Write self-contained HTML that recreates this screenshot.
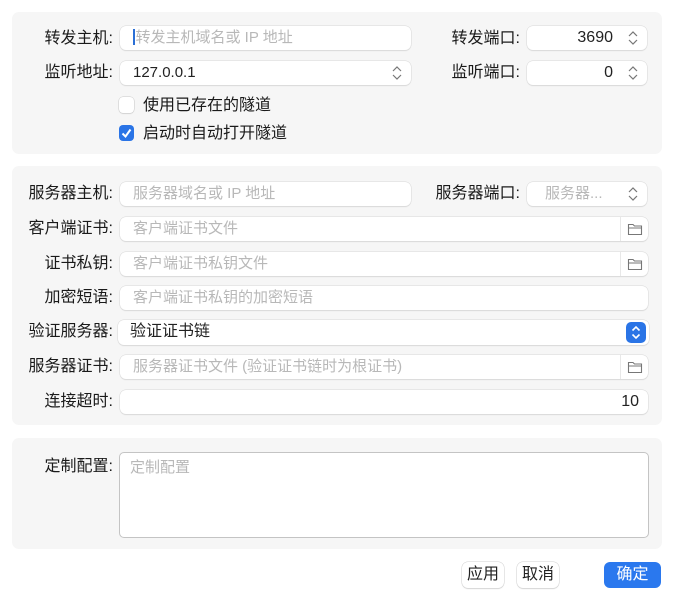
<!DOCTYPE html>
<html><head><meta charset="utf-8"><style>
*{box-sizing:border-box;margin:0;padding:0}
body{width:674px;height:600px;background:#fff;position:relative;overflow:hidden;font-family:"Liberation Sans","Noto Sans CJK SC",sans-serif;font-size:15px;color:#222}
.p{position:absolute;background:#f6f6f6;border-radius:7px}
.l{position:absolute;text-align:right;line-height:20px;color:#1a1a1a;font-size:16px}
.f{position:absolute;background:#fff;border-radius:6px;box-shadow:0 0 0 0.5px #d8d8d8,0 1px 1px rgba(0,0,0,.12);height:24px;line-height:24px;padding-left:13px;color:#222}
.ph{color:#b8b8b8}
.st{position:absolute;right:8px;top:4px;width:12px;height:16px}
.fold{position:absolute;right:0;top:0;width:28px;height:24px;border-left:1px solid #e8e8e8}
.cb{position:absolute;width:15px;height:16px;border-radius:4px;background:#fff;box-shadow:0 0 0 0.5px #c8c8c8,0 1px 1px rgba(0,0,0,.1)}
.btn{position:absolute;top:562px;height:26px;border-radius:6px;background:#fff;box-shadow:0 0 0 0.5px #d0d0d0,0 1px 1px rgba(0,0,0,.15);text-align:center;line-height:26px;font-size:16px}
</style></head><body>
<div class="p" style="left:12px;top:12px;width:650px;height:142px"></div>
<div class="p" style="left:12px;top:166px;width:650px;height:259px"></div>
<div class="p" style="left:12px;top:438px;width:650px;height:111px"></div>

<svg width="0" height="0" style="position:absolute"><defs>
<symbol id="up" viewBox="0 0 12 16"><path d="M2 6 L6 2 L10 6 M2 10 L6 14 L10 10" fill="none" stroke="#777" stroke-width="1.2"/></symbol>
<symbol id="fd" viewBox="0 0 16 14"><path d="M1.5 2.5 H6 L7.5 4 H14.5 V12.5 H1.5 Z M1.5 6 H14.5" fill="none" stroke="#777" stroke-width="1.1"/></symbol>
</defs></svg>

<div class="l" style="left:10px;top:29px;width:103px">转发主机:</div>
<div class="f ph" style="left:120px;top:26px;width:291px"><span style="display:inline-block;width:1.5px;height:16px;background:#2a6fd6;vertical-align:-3px;margin-right:1px"></span>转发主机域名或 IP 地址</div>
<div class="l" style="left:410px;top:29px;width:110px">转发端口:</div>
<div class="f" style="left:527px;top:26px;width:120px;text-align:right;padding-right:34px;font-size:16px">3690<svg class="st"><use href="#up"/></svg></div>

<div class="l" style="left:10px;top:63px;width:103px">监听地址:</div>
<div class="f" style="left:120px;top:61px;width:291px">127.0.0.1<svg class="st"><use href="#up"/></svg></div>
<div class="l" style="left:410px;top:63px;width:110px">监听端口:</div>
<div class="f" style="left:527px;top:61px;width:120px;text-align:right;padding-right:34px;font-size:16px">0<svg class="st"><use href="#up"/></svg></div>

<div class="cb" style="left:119px;top:97px"></div>
<div class="l" style="left:143px;top:96px;text-align:left">使用已存在的隧道</div>
<div class="cb" style="left:119px;top:125px;background:#2a74e6;box-shadow:none"><svg width="15" height="16"><path d="M3.5 8.5 L6.5 11.5 L11.5 4.5" fill="none" stroke="#fff" stroke-width="2"/></svg></div>
<div class="l" style="left:143px;top:124px;text-align:left">启动时自动打开隧道</div>

<div class="l" style="left:4px;top:184px;width:109px">服务器主机:</div>
<div class="f ph" style="left:120px;top:182px;width:291px">服务器域名或 IP 地址</div>
<div class="l" style="left:410px;top:184px;width:110px">服务器端口:</div>
<div class="f ph" style="left:527px;top:182px;width:120px;padding-left:18px">服务器...<svg class="st"><use href="#up"/></svg></div>

<div class="l" style="left:4px;top:219px;width:109px">客户端证书:</div>
<div class="f ph" style="left:120px;top:217px;width:528px">客户端证书文件<div class="fold"><svg width="16" height="14" style="position:absolute;left:6px;top:5px"><use href="#fd"/></svg></div></div>

<div class="l" style="left:4px;top:254px;width:109px">证书私钥:</div>
<div class="f ph" style="left:120px;top:252px;width:528px">客户端证书私钥文件<div class="fold"><svg width="16" height="14" style="position:absolute;left:6px;top:5px"><use href="#fd"/></svg></div></div>

<div class="l" style="left:4px;top:288px;width:109px">加密短语:</div>
<div class="f ph" style="left:120px;top:286px;width:528px">客户端证书私钥的加密短语</div>

<div class="l" style="left:4px;top:322px;width:109px">验证服务器:</div>
<div class="f" style="left:118px;top:320px;width:531px;height:25px;padding-left:12px;font-size:16px">验证证书链<div style="position:absolute;right:3px;top:2px;width:20px;height:21px;border-radius:5px;background:#2a74e6"><svg width="20" height="21"><path d="M6.5 8.5 L10 5 L13.5 8.5 M6.5 12.5 L10 16 L13.5 12.5" fill="none" stroke="#fff" stroke-width="1.6"/></svg></div></div>

<div class="l" style="left:4px;top:357px;width:109px">服务器证书:</div>
<div class="f ph" style="left:120px;top:355px;width:528px">服务器证书文件 (验证证书链时为根证书)<div class="fold"><svg width="16" height="14" style="position:absolute;left:6px;top:5px"><use href="#fd"/></svg></div></div>

<div class="l" style="left:4px;top:392px;width:109px">连接超时:</div>
<div class="f" style="left:120px;top:390px;width:528px;text-align:right;padding-right:9px;font-size:16px">10</div>

<div class="l" style="left:4px;top:457px;width:109px">定制配置:</div>
<div style="position:absolute;left:119px;top:452px;width:530px;height:86px;background:#fff;border:1px solid #c4c4c4;border-radius:5px;padding:5px 10px;color:#b8b8b8;line-height:20px">定制配置</div>

<div class="btn" style="left:462px;width:42px">应用</div>
<div class="btn" style="left:517px;width:42px">取消</div>
<div class="btn" style="left:604px;width:57px;background:#2a78ee;color:#fff;box-shadow:none">确定</div>
</body></html>
